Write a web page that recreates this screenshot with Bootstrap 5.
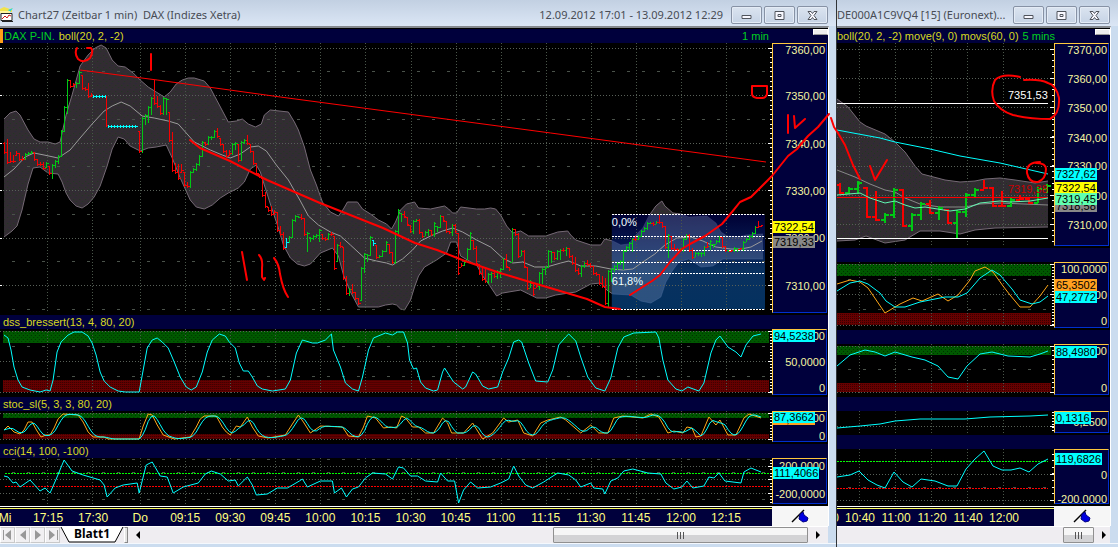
<!DOCTYPE html>
<html lang="de">
<head>
<meta charset="utf-8">
<meta name="viewport" content="width=device-width, initial-scale=1">
<title>Chart27 (Zeitbar 1 min) DAX (Indizes Xetra)</title>
<link rel="stylesheet" href="https://cdn.jsdelivr.net/npm/bootstrap@5.3.0/dist/css/bootstrap.min.css">
<style>
  :root { --navy: #00003c; --axis: #f5f5a0; --gold: #ffc83c; --edge: #0030d0; --frame: #cbdcef; }
  body { background: var(--frame); font-family: "Liberation Sans", Arial, sans-serif; font-size: 12px; line-height: 14px; color: #000; }
  .desk { min-height: 100vh; }
  .chart-win { min-width: 0; border-left: 1px solid #303438; background: var(--frame); }
  .chart-win.main-win { flex: 836 1 0; border-left: 0; }
  .chart-win.side-win { flex: 281 1 0; }
  .title-row { height: 26px; padding: 3px 8px 0 0; background: linear-gradient(#c2d0e2, #dbe6f5); color: #484c54; font-family: "Noto Sans", "Open Sans", sans-serif; }
  .title-row h1 { font-size: 11px; line-height: 16px; font-weight: 400; white-space: nowrap; min-width: 0; }
  .caption-btn { width: 31px; height: 18px; border: 1px solid #8792a5; border-radius: 2px; background: linear-gradient(#dbe4f0, #c6d3e5); box-shadow: inset 0 0 0 1px #e4ebf5; line-height: 0; }
  .caption { gap: 2px; }
  .inner { margin-right: 7px; border-top: 2px solid #85898f; border-right: 1px solid #fff; background: #000; }
  .strip { height: 14px; background: var(--navy); color: #d8d820; font-size: 11px; white-space: nowrap; overflow: hidden; flex: none; padding-left: 3px; }
  .strip.first { margin-top: 1px; }
  .strip.active { border-left: 3px solid #ffa018; padding-left: 1px; }
  .lime { color: #00d020; }
  .period { padding-right: 44px; }
  .split-grip { width: 15px; height: 6px; background: #eee; border: 1px solid #fff; border-bottom-color: #999; flex: none; }
  .panel { flex: var(--h) 1 0; min-height: 0; }
  .plot { min-width: 0; overflow: hidden; }
  .plot svg { position: absolute; width: 100%; height: 100%; display: block; }
  .plot path, .ink path { vector-effect: non-scaling-stroke; fill: none; }
  .plot span { position: absolute; transform: translateY(-50%); font-size: 11px; line-height: 12px; }
  .axis { width: 55px; flex: none; margin: 0 1px 2px 0; background: var(--navy); border: solid; border-width: 1px; border-color: var(--gold) var(--edge) var(--edge) var(--gold); color: var(--axis); font-size: 11px; overflow: hidden; }
  .axis span { position: absolute; right: 1px; line-height: 12px; transform: translateY(-50%); }
  .axis .tag { right: auto; left: 0; color: #000; padding: 0 1px; }
  .times { height: 20px; }
  .time-track { border-top: 1px solid #fff; min-width: 0; background: #000; padding-top: 1px; }
  .time-band { height: 18px; border-top: 1px solid #ffff60; background: var(--navy); color: #ffff80; overflow: hidden; }
  .time-band span { position: absolute; top: 2px; transform: translateX(-50%); }
  .corner { width: 56px; flex: none; background: #f6f6f6; }
  .foot { height: 17px; margin-right: 8px; background: #efedf1; border-top: 1px solid #fff; flex: none; }
  .foot-gap { height: 4px; border-top: 1px solid #f4f8fd; }
  .foot button { border: 0; background: transparent; padding: 0; line-height: 0; }
  .foot .step { width: 15px; border: 1px solid #c9c9c9; border-left-color: #fff; background: #f1f0f2; }
  .sheet { width: 64px; font-family: "Noto Sans", sans-serif; }
  .sheet svg { position: absolute; inset: 0; width: 100%; height: 100%; }
  .foot .sheet button { position: relative; line-height: 14px; font-weight: 700; width: 100%; }
  .divider { width: 4px; border: 1px solid #888; border-left-color: #fff; background: #e4e4e4; }
  .thumb { border: 1px solid #909090; border-radius: 1px; background: linear-gradient(#f6f6f6 0 50%, #d3d3d5 50%); line-height: 0; }
  #thumbA { width: 36.4%; }
  #thumbB { width: 31px; }
  .ink { position: absolute; inset: 0; width: 100%; height: 100%; pointer-events: none; }
</style>
<script src="https://cdn.jsdelivr.net/npm/bootstrap@5.3.0/dist/js/bootstrap.bundle.min.js"></script>
</head>
<body>
<main class="desk d-flex position-relative overflow-hidden">

  <section class="chart-win main-win d-flex flex-column">
    <header class="title-row d-flex align-items-center">
      <svg class="flex-shrink-0" width="14" height="16" viewBox="0 0 14 16"><path d="M0 2 4 0l6 2 2-1v4H0z" fill="#f2e34c"/><path d="M8 3l5-2-3 4z" fill="#20d8e8"/><path d="M0 4h10v2H0z" fill="#fff6a0"/><path d="M1 6.500h11v7H1z" fill="#fff" stroke="#222"/><path d="M2 12l3-3 2 2 2-3 2 1" fill="none" stroke="#d01818"/><path d="M2 14.500h11" stroke="#222"/></svg>
      <h1 class="m-0 ms-1 flex-grow-1">Chart27 (Zeitbar 1 min)&nbsp; DAX (Indizes Xetra)</h1>
      <h1 class="m-0 me-2">12.09.2012 17:01 - 13.09.2012 12:29</h1>
      <div class="caption d-flex"></div>
    </header>
    <div class="inner flex-grow-1 d-flex flex-column">
      <div class="strip first active d-flex"><span class="lime">DAX P-IN.</span><span class="ms-1 flex-grow-1">boll(20, 2, -2)</span><span class="lime period">1 min</span><i class="split-grip"></i></div>
      <div class="panel d-flex" id="price" style="--h:272"></div>
      <div class="strip">dss_bressert(13, 4, 80, 20)</div>
      <div class="panel d-flex" id="dss" style="--h:68"></div>
      <div class="strip">stoc_sl(5, 3, 3, 80, 20)</div>
      <div class="panel d-flex" id="stoc" style="--h:33"></div>
      <div class="strip">cci(14, 100, -100)</div>
      <div class="panel d-flex" id="cci" style="--h:48"></div>
      <div class="times d-flex"><div class="time-track flex-grow-1"><div class="time-band position-relative" id="timesA"></div></div>
        <div class="corner d-flex align-items-center justify-content-center"><svg width="18" height="14" viewBox="0 0 18 14"><path d="M1 13 13 1" stroke="#000" stroke-width="1.500"/><path d="M9 5l3-2 1 3 4 3-1 3-4 1-4-3z" fill="#0000e0" stroke="#000080"/></svg></div></div>
    </div>
    <footer>
      <div class="foot d-flex">
        <button class="step" aria-label="Erstes Blatt"><svg width="12" height="12"><path d="M9 1v10L3 6zM2 1v10H1V1z" fill="#989898"/></svg></button>
        <button class="step" aria-label="Voriges Blatt"><svg width="12" height="12"><path d="M9 1v10L3 6z" fill="#989898"/></svg></button>
        <button class="step" aria-label="Nächstes Blatt"><svg width="12" height="12"><path d="M3 1v10l6-5z" fill="#989898"/></svg></button>
        <button class="step" aria-label="Letztes Blatt"><svg width="12" height="12"><path d="M2 1v10l6-5zM10 1v10h1V1z" fill="#989898"/></svg></button>
        <div class="sheet position-relative"><svg viewBox="0 0 64 16" preserveAspectRatio="none"><path d="M1 0 9 15H55L63 0" fill="#fff" stroke="#000"/></svg><button>Blatt1</button></div>
        <div class="divider"></div>
        <div class="d-flex flex-grow-1 align-items-stretch">
          <button class="ps-2" aria-label="Nach links"><svg width="5" height="8"><path d="M4 0v8L0 4z"/></svg></button>
          <div class="flex-grow-1"></div>
          <div class="thumb d-flex align-items-center justify-content-center" id="thumbA"></div>
          <button class="ps-2 pe-2" aria-label="Nach rechts"><svg width="4" height="8"><path d="M0 0v8l4-4z"/></svg></button>
        </div>
      </div>
      <div class="foot-gap"></div>
    </footer>
  </section>

  <section class="chart-win side-win d-flex flex-column">
    <header class="title-row d-flex align-items-center">
      <h1 class="m-0 flex-grow-1 overflow-hidden">DE000A1C9VQ4 [15] (Euronext)...</h1>
      <div class="caption d-flex"></div>
    </header>
    <div class="inner flex-grow-1 d-flex flex-column">
      <div class="strip first d-flex ps-0"><span>boll(20, 2, -2) move(9, 0) movs(60, 0)</span><span class="lime ms-1 flex-grow-1">5 mins</span><i class="split-grip"></i></div>
      <div class="panel d-flex" id="p2" style="--h:205"></div>
      <div class="strip"></div>
      <div class="panel d-flex" id="s2" style="--h:68"></div>
      <div class="strip"></div>
      <div class="panel d-flex" id="d2" style="--h:53"></div>
      <div class="strip"></div>
      <div class="panel d-flex" id="v2" style="--h:24"></div>
      <div class="strip"></div>
      <div class="panel d-flex" id="c2" style="--h:57"></div>
      <div class="times d-flex"><div class="time-track flex-grow-1"><div class="time-band position-relative" id="timesB"></div></div>
        <div class="corner d-flex align-items-center justify-content-center"><svg width="18" height="14" viewBox="0 0 18 14"><path d="M1 13 13 1" stroke="#000" stroke-width="1.500"/><path d="M9 5l3-2 1 3 4 3-1 3-4 1-4-3z" fill="#0000e0" stroke="#000080"/></svg></div></div>
    </div>
    <footer>
      <div class="foot d-flex justify-content-end">
        <div class="thumb d-flex align-items-center justify-content-center" id="thumbB"></div>
        <button class="ps-2 pe-1" aria-label="Nach rechts"><svg width="4" height="8"><path d="M0 0v8l4-4z"/></svg></button>
      </div>
      <div class="foot-gap"></div>
    </footer>
  </section>

  <svg class="ink" viewBox="0 0 1118 547" preserveAspectRatio="none" stroke="#f00" stroke-width="2" stroke-linecap="round" stroke-linejoin="round">
    <path d="M77 48Q74 53 78 59Q84 64 90 58Q94 51 91 48L87 48M151 54V70M242 252 247 280M259 255Q263 259 262 268V277L264 280 265 278M274 258Q279 264 280 274Q283 290 288 297M752 86H767V94Q766 98 762 98H757Q752 97 752 94ZM788 115V133M794 116 795 128 805 119"/>
    <path d="M190 140 200 148 230 161 267 180 320 203 383 228 415 243 437 250 465 261 500 273 540 285 587 299 605 307 620 309M630 295 652 281 660 275 670 262 682 249 690 244 705 236 722 224 732 212 740 202 751 197 772 176 788 156 797 149 808 136 818 127 829 114"/>
    <path d="M831 118 834 127 838 133 845 145 853 165 860 179M870 166 875 180 887 160M1040 162Q1026 162 1027 173Q1029 183 1038 182Q1046 179 1046 169Q1046 163 1036 163M1020 77Q1002 73 995 80Q990 90 994 101Q1000 111 1013 115Q1030 119 1050 119Q1060 114 1059 98Q1056 85 1048 83Q1040 79 1024 80"/>
  </svg>
</main>

<script>
const fix = n => Math.floor(n) + .5;
const line = (pts, color, w = 1) => `<path d="M${pts}" stroke="${color}" stroke-width="${w}"/>`;
const rect = (x, y, w, h, fill) => `<rect x="${x}" y="${y}" width="${w}" height="${h}" fill="${fill}"/>`;
const hline = (x1, x2, y, color, dash = '') => `<path d="M${x1} ${fix(y)}H${x2}" stroke="${color}" stroke-dasharray="${dash}" shape-rendering="crispEdges"/>`;
const vgrid = (xs, y1, y2) => xs.map(x => `<path d="M${x} ${y1}V${y2}" stroke="#4a564a" stroke-dasharray="1 2" shape-rendering="crispEdges"/>`).join('');
const dots = (x1, x2, ys) => ys.map(y => hline(x1, x2, y, '#586058', '1 2')).join('');
const dashes = (x1, x2, ys) => ys.map(y => hline(x1, x2, y, '#4a524a', '3 12')).join('');
const ticks = (x, y1, y2, step, majors) => {
  let d = '';
  for (let y = y1; y < y2; y += step) d += `M${x - 2} ${fix(y)}H${x}`;
  majors.forEach(y => d += `M${x - 4} ${fix(y)}H${x}`);
  return `<path d="${d}" stroke="#fff" shape-rendering="crispEdges"/>`;
};
const band = (up, low) => `<polygon points="${up} ${low.split(' ').reverse().join(' ')}" fill="url(#grain)"/>` + line(up, '#756a75') + line(low, '#756a75');
const zones = (x, w, g1, g2, r1, r2) => rect(x, g1, w, g2 - g1, 'url(#green)') + rect(x, r1, w, r2 - r1, 'url(#red)');
const defs = `<defs><pattern id="grain" width="6" height="6" patternUnits="userSpaceOnUse"><rect width="6" height="6" fill="#322c32"/><path d="M1 1h1v1H1zM4 3h1v1H4z" style="fill:#203820"/><path d="M3 5h1v1H3z" style="fill:#28283c"/></pattern>
<pattern id="green" width="4" height="4" patternUnits="userSpaceOnUse"><rect width="4" height="4" fill="#005800"/><path d="M1 1h1v1H1zM3 3h1v1H3z" style="fill:#003000"/></pattern>
<pattern id="red" width="2" height="2" patternUnits="userSpaceOnUse"><rect width="2" height="2" fill="#660000"/><path d="M0 0h1v1H0z" style="fill:#380000"/></pattern>
<linearGradient id="fib" x2="0" y2="1"><stop offset="0" stop-color="#000048"/><stop offset=".3" stop-color="#08206c"/><stop offset=".6" stop-color="#0c4484"/><stop offset="1" stop-color="#064484"/></linearGradient></defs>`;

function bars(text, w) {
  let d = { g: '', r: '', c: '' }, prev = null;
  text.trim().split(/\s+/).forEach(s => {
    let [x, hi, lo, k] = s.split(',');
    x = +x + (w === 1 ? .5 : 0); hi = +hi; lo = +lo;
    const close = k === 'r' ? lo - 1.5 : k === 'g' ? hi + 1.5 : (hi + lo) / 2;
    if (prev === null) prev = k === 'r' ? hi + 1.5 : lo - 1.5;
    const open = Math.min(lo, Math.max(hi, prev)), t = w === 1 ? 2 : 4;
    d[k] += `M${x} ${hi}V${lo}M${x - t} ${fix(open)}H${x}M${x} ${fix(close)}H${x + t}`;
    prev = close;
  });
  const col = { g: '#00c814', r: '#f80000', c: '#00f0ff' };
  return Object.keys(d).map(k => d[k] ? `<path d="${d[k]}" stroke="${col[k]}" stroke-width="${w}" shape-rendering="crispEdges"/>` : '').join('');
}

/* Signal line: a short trailing mean of the raw stochastic. */
function signal(pts) {
  const p = pts.split(' ').map(s => s.split(',').map(Number)), out = [];
  const at = x => { for (let i = 1; i < p.length; i++) if (x <= p[i][0]) { const a = p[i - 1], b = p[i]; return x <= a[0] ? a[1] : a[1] + (b[1] - a[1]) * (x - a[0]) / (b[0] - a[0]); } return p[p.length - 1][1]; };
  for (let x = 4; x <= 760; x += 3) out.push(x + ',' + ((at(x) + at(x - 3) + at(x - 6)) / 3).toFixed(1));
  return out.join(' ');
}

/* Fills one panel: the plot with its notes, then the value axis with labels and price tags. */
function panel(id, [x, y, w, h], art, labels, notes = []) {
  const pct = (v, o, s) => ((v - o) / s * 100).toFixed(2) + '%';
  document.getElementById(id).innerHTML =
    `<div class="plot position-relative flex-grow-1"><svg viewBox="${x} ${y} ${w} ${h}" preserveAspectRatio="none">${defs + art}</svg>` +
    notes.map(([t, nx, ny, c]) => `<span style="left:${pct(nx, x, w)};top:${pct(ny, y, h)};color:${c}">${t}</span>`).join('') +
    `</div><div class="axis position-relative">` +
    labels.map(([t, ly, bg]) => `<span ${bg ? 'class="tag"' : ''} style="top:${pct(ly, y + 1, h - 4)}${bg ? ';background:' + bg : ''}">${t}</span>`).join('') + '</div>';
}

const gx = [47.5, 92.5]; for (let x = 140.5; x < 760; x += 45) gx.push(x);
const gy = [48, 95, 143, 190, 238, 285];

const up = '4,119 10,113 16,111 20,115 28,130 34,139 40,142 48,142 55,144 60,142 66,115 72,95 80,66 88,55 95,48 101,45 106,48 112,60 118,66 125,67 133,73 140,80 148,87 156,92 164,97 170,92 176,84 182,80 188,78 194,78 204,81 210,88 218,103 228,122 236,121 242,119 248,124 255,127 261,124 264,115 270,110 288,112 294,122 298,130 304,147 310,170 316,185 322,202 330,212 338,216 343,209 347,202 357,202 362,209 370,214 378,220 386,224 391,229 395,222 400,210 406,204 414,202 418,208 430,209 444,206 448,209 452,213 456,213 460,207 476,209 484,209 490,208 495,209 500,215 506,226 512,233 520,231 528,236 545,236 557,232 567,231 570,235 575,240 590,245 600,245 604,239 612,241 620,245 628,244 635,235 642,228 648,216 655,206 661,201 664,206 672,213 680,214 688,217 706,216 715,223 720,232 726,236 738,237 745,235 762,234';
const low = '4,237 12,231 17,226 22,210 28,184 33,168 40,167 48,173 58,174 62,182 66,193 70,200 76,206 82,208 88,204 94,197 100,186 107,166 112,149 118,137 124,139 130,146 140,151 148,148 156,147 166,145 172,158 180,178 190,200 196,207 204,209 212,205 220,198 228,193 238,188 244,182 250,169 256,165 260,172 264,185 270,204 278,228 283,245 290,258 297,264 304,266 310,264 320,253 332,248 338,256 343,275 350,292 358,307 378,307 385,305 392,304 396,305 400,309 404,310 410,300 414,287 418,276 424,267 436,260 446,253 450,242 456,242 460,256 472,263 476,265 482,276 488,284 496,296 502,293 520,290 528,294 536,298 545,298 555,295 575,292 590,284 600,283 606,290 612,294 630,295 640,301 650,303 660,297 665,282 672,270 678,262 688,259 700,267 712,266 722,259 762,259';
const mid = '4,177 14,169 25,157 34,153 44,155 58,158 70,150 80,138 92,124 104,111 112,106 121,102 130,106 142,116 154,118 168,121 178,124 194,142 210,150 222,155 230,158 240,154 250,147 258,146 266,151 276,165 288,180 300,201 308,216 318,225 330,232 340,236 350,245 364,258 376,261 386,263 392,265 402,259 412,250 420,241 430,236 442,231 452,228 462,232 476,240 490,247 502,258 512,263 522,262 534,267 546,267 560,263 568,261 580,266 595,266 610,269 622,270 632,269 642,262 654,254 664,245 676,238 690,237 702,241 715,247 730,249 740,249 750,247 761,241';
const quotes = `4,142,154,r 7,139,164,r 10,152,163,r 13,155,163,r 16,151,155,r 19,153,161,r 22,156,161,r 25,153,159,g 28,152,155,g 31,151,153,g 34,152,161,r 37,159,166,r 40,162,166,r 43,162,170,r 46,162,167,g 49,166,175,r 52,164,179,g 55,160,168,g 58,155,164,g 61,130,157,g 64,106,132,g 67,79,114,g 70,80,88,r 73,83,86,r 76,82,88,g 79,71,84,g 82,75,90,r 85,87,91,r 88,83,98,r 91,93,97,r 106,96,127,r
139,131,153,r 142,117,153,g 145,114,125,g 148,106,123,g 151,97,115,g 154,80,105,r 157,96,108,r 160,105,115,r 163,97,115,g 166,98,115,g 169,112,142,r 172,132,172,r 175,163,174,r 178,164,180,r 181,164,172,r 184,172,187,r 187,182,188,r 190,171,188,g 193,168,172,g 196,163,171,g 199,155,166,g 202,141,156,g 205,142,146,r 208,136,145,g 211,136,140,g 214,130,138,g 217,128,138,r 220,138,146,r 223,144,153,r 226,150,158,r 229,150,155,r 232,143,155,g 235,142,150,g 238,144,162,r 241,141,160,g 244,139,144,g 247,135,145,r 250,144,153,r 253,151,165,r 256,163,175,r 259,174,178,r 262,178,197,r 265,192,208,r 268,207,212,r 271,206,216,r 274,210,214,r 277,212,232,r
280,226,236,r 283,232,250,r 286,238,247,c 289,236,242,g 292,219,238,g 295,215,222,g 298,216,218,g 301,214,220,r 304,218,236,r 307,232,252,g 310,237,242,g 313,235,240,g 316,234,238,g 319,229,242,g 322,234,240,r 325,237,241,r 328,233,240,g 331,232,236,r 334,236,270,r 337,244,261,g 340,242,248,r 343,247,280,r 346,276,295,r 349,288,296,g 352,284,294,r 355,292,300,r 358,298,305,r 361,267,300,g 364,253,273,g 367,254,262,g 370,236,256,g 373,240,246,c 376,245,259,r 379,255,258,g 382,250,257,g 385,241,252,g 388,244,254,r 391,252,264,r 394,230,264,g 397,209,234,g 400,213,222,g 403,211,218,r 406,217,226,r 409,225,233,r 412,220,234,g 415,219,222,g 418,219,234,r 421,232,238,r 424,231,236,g 427,229,236,g 430,230,236,r 433,222,237,g 436,226,232,g 439,215,228,g 442,216,222,r 445,221,233,r 448,231,234,r 451,224,236,g 454,224,233,r 457,233,275,r 460,263,267,r 463,261,266,g 466,248,260,g 469,232,250,g 472,240,250,r 475,246,265,r 478,264,275,r 481,268,281,r 484,268,283,r 487,273,284,g 490,272,283,g 493,272,278,r 496,270,279,g 499,268,278,g 502,258,270,g 505,254,268,r 508,267,271,r 511,228,262,g 514,229,236,r 517,233,258,r 520,250,256,g 523,250,268,r 526,267,290,r 529,280,288,g 532,283,296,r 535,284,288,r 538,272,290,g 541,268,284,g 544,266,275,g 547,250,268,g 550,251,263,g 553,252,260,r 556,250,260,g
559,249,260,g 562,248,252,r 565,247,256,g 568,248,258,r 571,255,265,r 574,257,272,r 577,268,275,r 580,265,277,g 583,262,268,g 586,260,266,r 589,263,268,r 592,266,275,r 595,272,276,r 598,274,285,r 601,276,288,r 604,278,305,r 607,270,308,g 610,268,282,g 613,265,272,g 616,262,270,g 619,260,265,g 622,250,270,g 625,246,252,g 628,242,250,g 631,238,252,g 634,236,241,r 637,235,240,g 640,230,237,g 643,227,232,g 646,222,230,g 649,222,224,g 652,222,226,r 655,221,224,g 658,215,224,r 661,222,228,r 664,226,249,r 667,234,258,g 670,236,250,r 673,244,251,r 676,248,251,r 679,248,252,g 682,238,252,g 685,234,240,g 688,234,252,r 691,248,259,r 694,252,257,g 697,252,256,g 700,252,257,g 703,246,256,g 706,242,248,r 709,240,250,g 712,244,248,g 715,240,244,g 718,236,243,g 721,237,248,r 724,246,252,r 727,250,252,g 730,250,252,r 733,247,252,g 736,248,252,g 739,248,250,r 742,241,251,g 745,238,242,g 748,235,240,g 751,232,238,g 754,226,234,g 757,221,228,r 760,225,227,r`;

panel('price', [0, 43, 771, 272],
  band(up, low) + `<rect x="611" y="214" width="153" height="95" fill="url(#fib)" fill-opacity=".72"/>` +
  `<clipPath id="zone"><rect x="611" y="214" width="153" height="95"/></clipPath><polygon clip-path="url(#zone)" points="${up} ${low.split(' ').reverse().join(' ')}" fill="#6a80a8" fill-opacity=".3"/>` +
  vgrid(gx, 43, 313) + dots(0, 768, gy) + dashes(12, 765, [71, 119, 166, 214, 261, 309]) +
  line(mid, '#9a9a9a') + [214, 236, 250, 262, 273, 309].map(y => hline(611, 764, y, '#fff', '2 1')).join('') +
  bars(quotes, 1) + hline(93, 106, 96, '#0ff') + hline(93, 106, 95, '#0ff', '1 2') + hline(93, 106, 97, '#0ff', '1 2') + hline(108, 138, 126, '#0ff') + hline(108, 138, 125, '#0ff', '1 2') + hline(108, 138, 127, '#0ff', '1 2') +
  line('80,70 157,80 280,97 550,133 765,162', '#f00') + ticks(771, 48, 312, 4.75, gy) + `<path d="M0 48.500h2M0 95.500h2M0 143.500h2M0 190.500h2M0 238.500h2M0 285.500h2" stroke="#fff"/>`,
  [['7360,00', 50], ['7350,00', 96], ['7340,00', 144], ['7330,00', 191], ['7320,00', 238], ['7310,00', 286], ['7319,33', 242, '#888'], ['7322,54', 227, '#ff0']],
  [['0,0%', 611, 222, '#f0ffff'], ['61,8%', 611, 281, '#f0ffff']]);

const dss = '4,335 8,338 11,350 14,367 18,380 22,387 30,390 40,392 46,390 50,391 53,380 57,352 61,342 68,335 74,332 82,332 88,336 92,343 96,355 100,372 104,381 110,387 118,391 125,392 139,392 143,370 147,348 152,340 157,338 162,342 168,348 174,362 180,377 186,387 191,390 196,387 202,372 207,352 212,340 219,334 225,336 229,342 235,348 239,363 243,371 248,371 252,377 257,386 262,389 272,391 285,389 290,380 296,353 302,340 312,343 317,343 325,340 331,334 333,350 340,367 345,383 352,389 358,391 362,377 368,350 373,338 385,333 392,335 397,332 403,332 407,343 409,360 413,369 416,368 420,382 425,388 433,391 437,390 442,372 444,368 453,382 462,389 465,387 472,372 475,374 482,386 488,389 497,387 502,372 508,358 513,342 518,340 521,342 528,363 535,381 547,382 552,370 558,345 565,337 568,334 575,341 580,357 587,377 595,388 604,391 610,378 617,348 623,337 633,333 655,332 658,338 662,360 667,380 675,389 681,391 687,387 698,391 703,383 710,353 715,340 719,336 727,347 735,352 740,357 745,345 752,336 760,334';
panel('dss', [0, 329, 771, 68], zones(3, 765, 331, 343, 380, 392) + vgrid(gx, 329, 394) + dots(0, 768, [331, 361, 392]) + dashes(12, 765, [346, 376]) + line(dss, '#0ff') + ticks(771, 331, 393, 3, [331, 361, 392]),
  [['100,0000', 336], ['50,0000', 362], ['0', 388], ['94,5238', 336, '#0ff']]);

const st = '4,430 8,426 14,432 20,434 24,430 28,422 32,422 37,431 41,437 46,435 50,435 54,428 58,419 63,414 78,415 83,422 88,432 93,437 104,437 108,439 139,439 143,426 148,414 152,415 157,425 163,435 174,439 190,437 196,427 200,419 204,416 216,416 222,427 226,432 230,435 236,426 240,427 247,417 252,427 258,436 268,438 285,435 292,424 298,415 303,422 310,433 320,426 342,427 348,436 358,437 363,427 367,416 375,418 383,428 390,427 396,428 401,416 405,418 412,427 418,427 425,433 433,433 442,418 447,423 451,433 463,433 472,423 482,439 492,433 503,418 508,422 517,420 523,433 532,436 540,423 547,420 560,417 565,420 580,433 590,425 598,433 607,433 613,418 622,416 642,418 650,414 658,417 667,433 673,431 682,433 686,427 691,428 695,437 700,436 708,417 715,425 719,420 727,435 735,435 743,418 748,414 760,418';
panel('stoc', [0, 411, 771, 33], zones(3, 765, 413, 418, 434, 439) + vgrid(gx, 411, 441) + dots(0, 768, [413, 439]) + line(st, '#ffa818') + line(signal(st), '#0ff') + ticks(771, 413, 440, 3, [413, 439]),
  [['100,0000', 418], ['0', 436], ['87,3662', 419, '#ffa020'], ['87,3662', 417, '#0ff']]);

const cci = '4,476 8,477 13,483 16,482 20,487 30,480 40,491 45,488 50,493 57,477 64,460 72,471 83,475 100,480 104,485 107,497 115,488 123,485 137,483 139,493 143,477 146,465 152,462 160,476 167,477 173,493 183,487 198,483 205,474 211,471 220,474 228,481 235,480 238,486 247,477 252,485 256,495 267,494 277,488 287,488 299,481 302,479 307,487 320,481 332,481 334,493 341,488 346,497 352,489 358,487 365,478 372,473 385,474 392,479 398,467 403,468 410,476 417,476 425,481 437,482 440,473 447,481 454,481 458,503 463,490 470,482 477,488 490,487 500,483 508,479 513,466 518,476 525,485 532,488 543,482 557,473 568,475 575,480 580,487 590,483 593,488 602,489 604,494 610,481 617,478 623,471 632,469 647,473 660,474 665,483 673,489 681,487 686,481 692,488 703,486 708,477 713,478 718,473 724,481 740,483 743,472 750,468 760,472';
panel('cci', [0, 458, 771, 48], vgrid(gx, 458, 505) + dots(0, 768, [466, 479, 493]) + dashes(12, 765, [459, 472, 499]) + hline(5, 768, 473, '#0f0', '2 1') + hline(5, 768, 486, '#f00', '2 1') + line(cci, '#0ff') + ticks(771, 460, 505, 3.3, [466, 479, 493]),
  [['200,0000', 466], ['-200,0000', 494], ['111,4066', 473, '#0ff']]);

/* Five-minute window */
const hx = [859.5, 895.5, 931.5, 967.5, 1003.5], L = 837, W = 217, R = 1052;
panel('p2', [L, 43, W, 205],
  band('837,99 848,107 860,122 866,126 885,134 895,142 905,152 915,166 922,174 945,180 960,182 975,181 985,179 1000,178 1015,180 1035,183 1048,181', '837,241 855,240 866,236 885,243 905,240 920,231 940,231 960,234 975,230 995,228 1048,227') +
  vgrid(hx, 43, 246) + dots(L, R, [49, 78, 107, 137, 166, 195, 224]) +
  hline(L, 1048, 103, '#fff') + hline(L, 1048, 238, '#fff') +
  line('837,170 855,177 870,184 885,190 895,192 905,198 920,204 940,207 965,207 980,204 1000,203 1048,205', '#888') +
  bars('840,183,194,r 849,187,194,g 858,181,194,g 867,187,218,r 876,191,221,r 885,213,223,g 894,188,218,g 903,189,227,r 912,213,231,g 921,202,220,g 930,200,214,r 939,206,220,g 948,209,224,r 957,210,238,g 966,193,217,g 975,188,198,g 984,180,189,r 993,187,207,r 1002,191,207,r 1011,198,207,g 1020,195,200,r 1029,198,204,r 1038,187,203,g 1047,184,193,g', 2) +
  hline(L, 1048, 197, '#f00') +
  line('837,195 860,193 870,198 885,203 895,201 905,205 915,208 925,207 950,211 965,209 980,203 1000,201 1010,202 1030,201 1048,198', '#60f8b0') +
  line('837,130 880,138 895,142 930,149 960,156 1000,163 1048,174', '#0ff') + ticks(L + W, 49, 245, 5.84, [49, 78, 107, 137, 166, 195, 224]),
  [['7370,00', 50], ['7360,00', 79], ['7350,00', 108], ['7340,00', 138], ['7330,00', 166], ['7320,00', 196], ['7310,00', 225], ['7318,58', 206, '#888'], ['7322,54', 188, '#ff0'], ['7319,45', 199, '#60ffb0'], ['7327,62', 174, '#0ff']],
  [['7351,53', 1008, 95, '#fff'], ['7319,38', 1008, 189, '#c80000']]);
panel('s2', [L, 262, W, 68], zones(L, 214, 264, 276, 313, 325) + vgrid(hx, 262, 327) + dots(L, R, [264, 294, 325]) + dashes(848, R, [279, 309]) +
  line('837,284 850,280 860,282 868,288 885,313 900,304 913,298 922,301 938,294 948,301 958,295 970,280 975,271 985,267 993,272 1003,286 1010,295 1020,307 1030,307 1040,296 1048,285', '#ffa818') +
  line('837,291 850,283 860,281 868,284 880,293 886,301 895,307 905,307 920,302 930,300 945,297 958,297 967,293 980,278 992,270 1000,275 1012,289 1020,300 1032,304 1040,302 1048,296', '#0ff') + ticks(L + W, 264, 326, 3, [264, 294, 325]),
  [['100,0000', 269], ['50,0000', 295], ['0', 321], ['65,3502', 285, '#ffa020'], ['47,2772', 297, '#0ff']]);
panel('d2', [L, 344, W, 53], zones(L, 214, 346, 355, 383, 392) + vgrid(hx, 344, 394) + dots(L, R, [346, 392]) + dashes(848, R, [369]) +
  line('837,366 850,355 865,350 875,352 885,356 895,352 912,357 925,360 938,366 948,377 958,379 967,366 980,354 992,352 1008,356 1030,357 1040,354 1048,351', '#0ff') + ticks(L + W, 346, 393, 4.6, [346, 392]),
  [['100,0000', 351], ['0', 388], ['88,4980', 352, '#0ff']]);
panel('v2', [L, 411, W, 24], vgrid(hx, 411, 433) + dots(L, R, [426]) + line('837,428 860,426 880,424 895,421 920,419 965,419 990,417 1030,416 1048,415', '#0ff') + ticks(L + W, 412, 433, 3, [426]),
  [['0,2500', 422], ['0,1316', 418, '#0ff']]);
panel('c2', [L, 449, W, 57], vgrid(hx, 449, 505) + dots(L, R, [474, 500]) + dashes(848, R, [461, 487]) + hline(L, 1048, 461, '#0f0', '2 1') + hline(L, 1048, 488, '#f00', '2 1') +
  line('837,477 850,475 859,471 868,480 877,485 885,488 894,472 903,482 912,487 921,479 935,481 948,486 957,486 966,469 975,459 984,451 993,466 1002,470 1011,470 1020,468 1029,472 1038,464 1048,459', '#0ff') + ticks(L + W, 454, 505, 6.6, [474, 500]),
  [['0', 475], ['-200,0000', 499], ['119,6826', 459, '#0ff']]);

function times(id, list, x0, w) {
  document.getElementById(id).innerHTML = list.map(([t, x]) => `<span style="left:${((x - x0) / w * 100).toFixed(2)}%">${t}</span>`).join('');
}
const tl = [['Mi', 5], ['17:15', 48], ['17:30', 93], ['Do', 140]];
for (let i = 0; i < 13; i++) { const m = 555 + 15 * i; tl.push([String(m / 60 | 0).padStart(2, '0') + ':' + String(m % 60).padStart(2, '0'), 185 + 45 * i]); }
times('timesA', tl, 0, 771);
times('timesB', [['10:20', 824], ['10:40', 860], ['11:00', 896], ['11:20', 932], ['11:40', 968], ['12:00', 1004]], L, W);

const icons = [['Minimieren', '<path d="M10 8.500h9v3h-9z"/>'], ['Maximieren', '<path d="M10 4.500h9v8h-9z"/><path d="M13 7.500h3v2h-3z"/>'], ['Schließen', '<path d="M10 4.500h3l1.500 2 1.500-2h3l-3 4 3 4h-3l-1.500-2-1.500 2h-3l3-4z"/>']];
document.querySelectorAll('.caption').forEach(c => { c.innerHTML = icons.map(([n, p]) => `<button class="caption-btn p-0" aria-label="${n}"><svg width="29" height="16" fill="#f8f8ff" stroke="#50545c">${p}</svg></button>`).join(''); });
const grip = '<svg width="8" height="7"><path d="M.5 0v7M3.500 0v7M6.500 0v7" stroke="#555"/></svg>';
document.getElementById('thumbA').innerHTML = grip;
document.getElementById('thumbB').innerHTML = grip;
</script>
</body>
</html>
